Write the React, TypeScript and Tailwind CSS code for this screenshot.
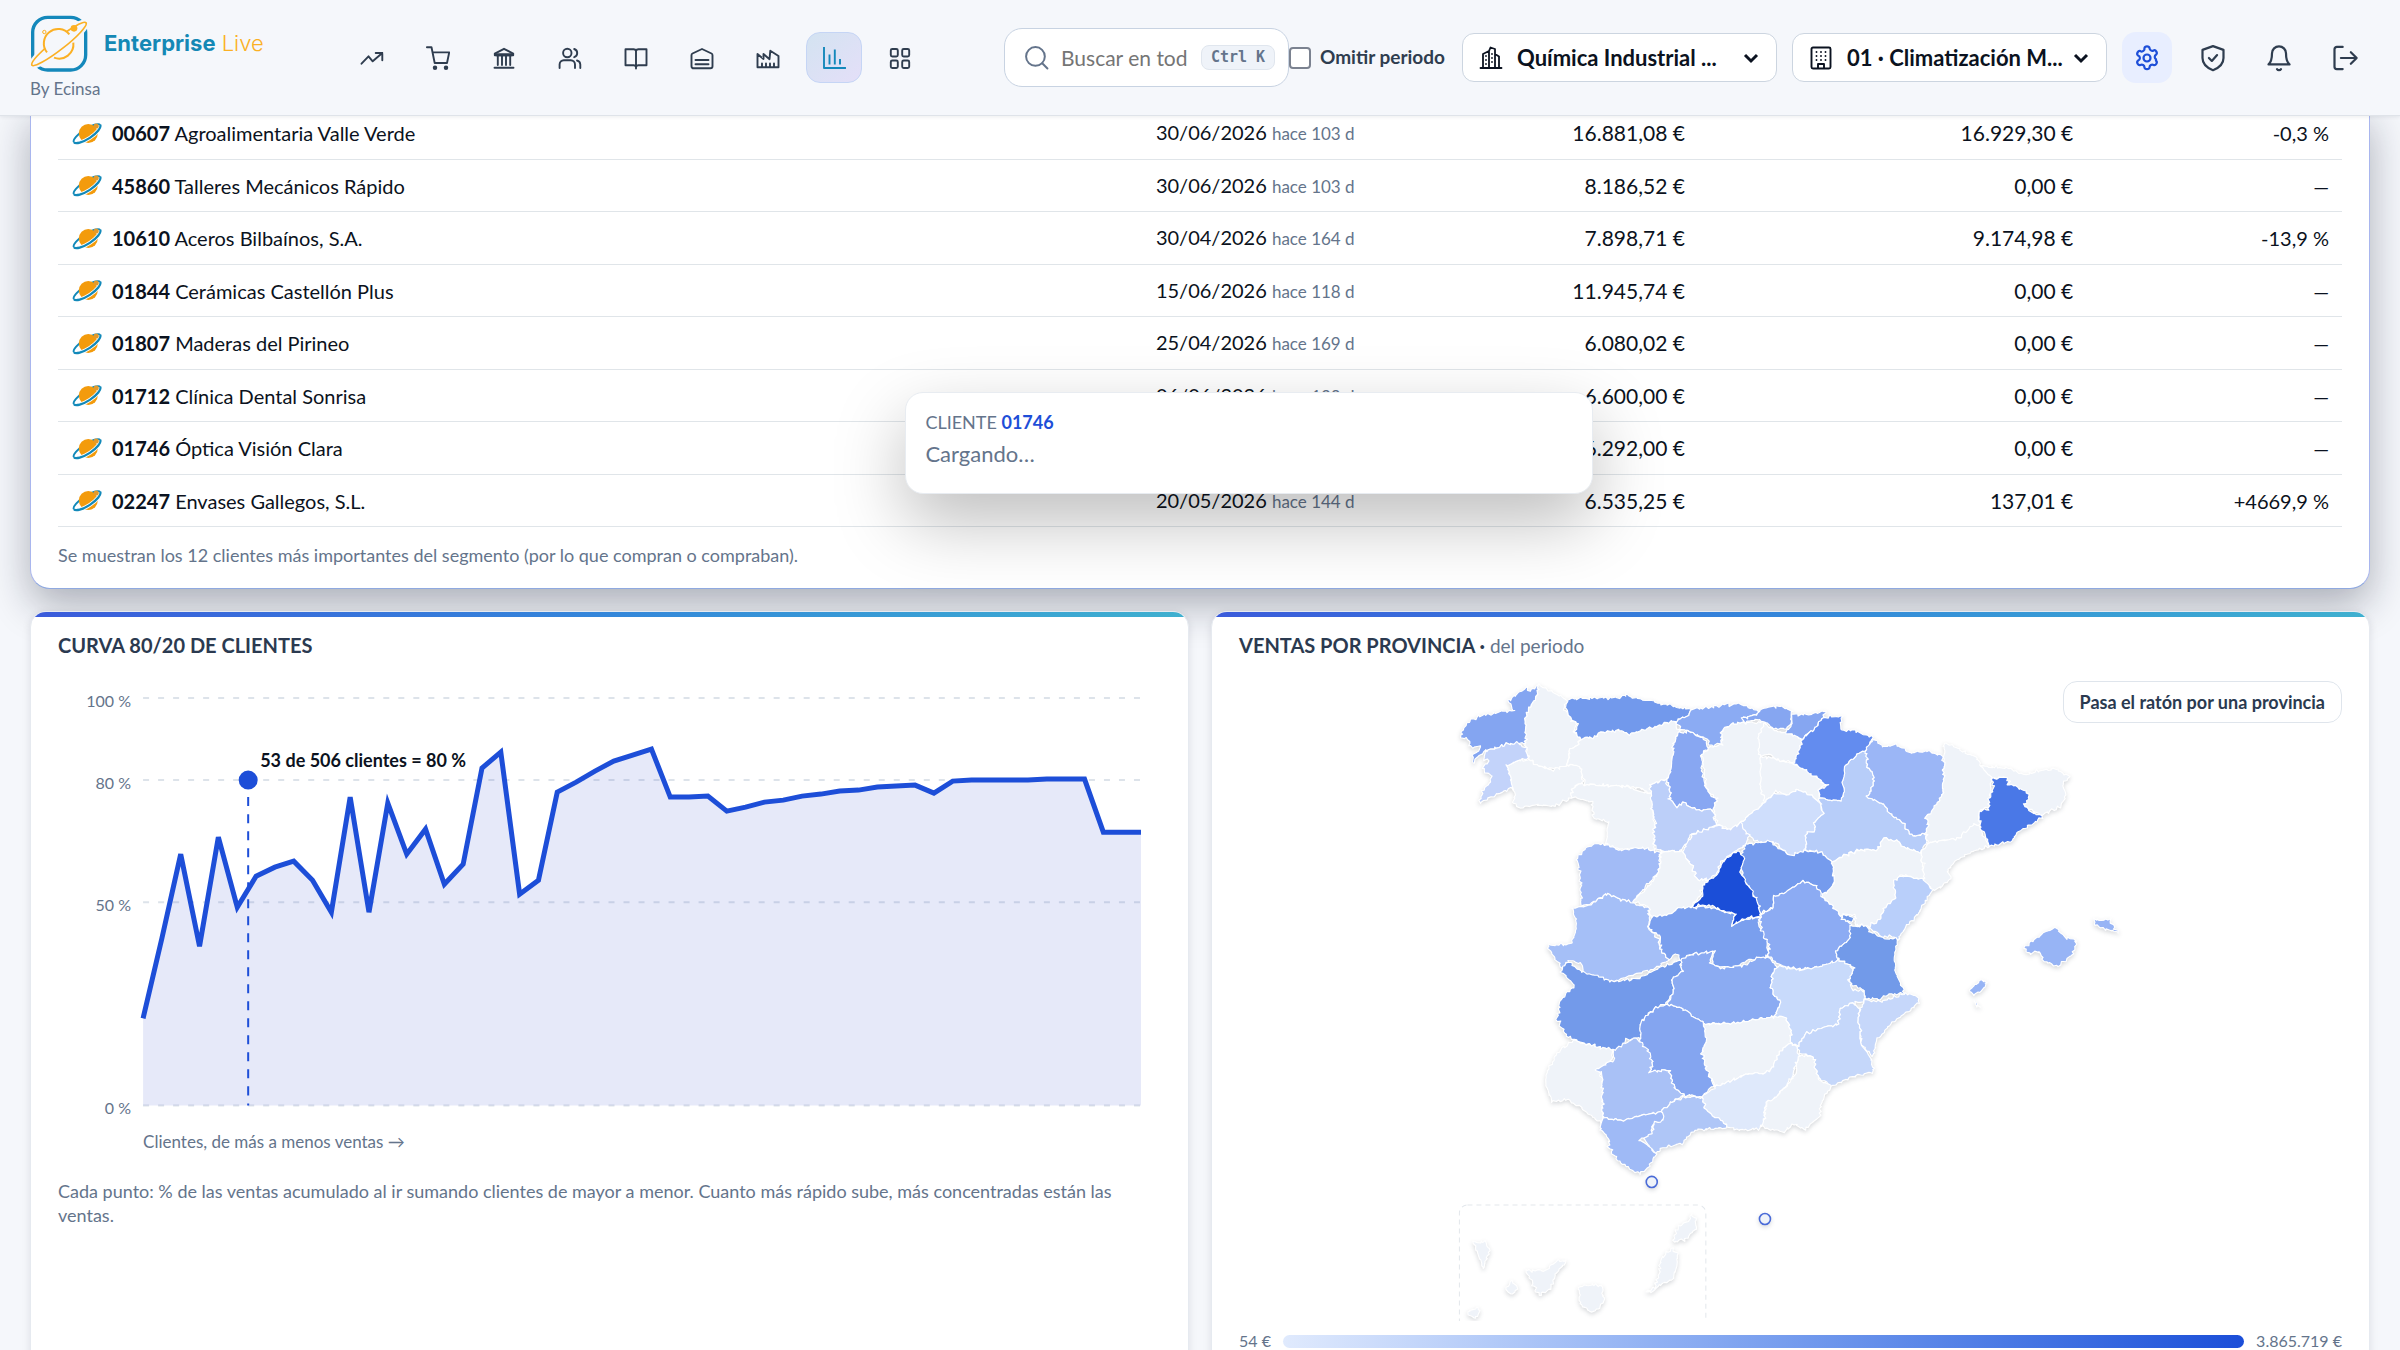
import { useId } from "react";
import type { ReactNode } from "react";

/* ---------- icons ---------- */

function Icon({ children, className = "size-6" }: { children: ReactNode; className?: string }) {
  return (
    <svg viewBox="0 0 24 24" fill="none" stroke="currentColor" strokeWidth="1.9" strokeLinecap="round" strokeLinejoin="round" className={className} aria-hidden="true">
      {children}
    </svg>
  );
}

const navItems: { label: string; active?: boolean; icon: ReactNode }[] = [
  { label: "Ventas", icon: <path d="M1.5 17.7 8.5 10.3l4.2 5L22.3 7M15.7 7h6.6v7.3" /> },
  {
    label: "Compras",
    icon: (
      <>
        <path d="M.9 1.2h4.6L8.7 17H21l2.2-10.6H6.6" />
        <circle cx="9" cy="21.7" r="1.3" fill="currentColor" />
        <circle cx="20" cy="21.7" r="1.3" fill="currentColor" />
      </>
    ),
  },
  {
    label: "Tesorería",
    icon: (
      <>
        <path d="M12 2.8 2.8 7.6v1.6h18.4V7.6Z" />
        <path d="M4.5 8.8h15" strokeWidth="3" />
        <path d="M5.8 10v9M10 10v9M14 10v9M18.2 10v9" />
        <path d="M2.5 21.8h19" />
      </>
    ),
  },
  {
    label: "Clientes",
    icon: (
      <>
        <circle cx="9.3" cy="7" r="4.2" />
        <path d="M16.2 3a4.3 4.3 0 0 1 0 8.2M1.6 22v-3.6A4.2 4.2 0 0 1 5.8 14.2h7a4.2 4.2 0 0 1 4.2 4.2V22M19 14.5a4.3 4.3 0 0 1 3.3 4.1V22" />
      </>
    ),
  },
  { label: "Contabilidad", icon: <path d="M12 5v17.5M1.5 3.2H9.5A2.5 2.5 0 0 1 12 5a2.5 2.5 0 0 1 2.5-1.8h8v16h-8A2.5 2.5 0 0 0 12 21a2.5 2.5 0 0 0-2.5-1.8h-8Z" /> },
  { label: "Almacén", icon: <path d="M1.5 9.2q0-1.2 1-1.7L12 3l9.5 4.5q1 .5 1 1.7V20.3a2 2 0 0 1-2 2h-17a2 2 0 0 1-2-2ZM5.5 14h13M5.5 18.2h13" /> },
  { label: "Producción", icon: <path d="M1.5 21.3V8l6 5V8l6 5.2.8-8.4L22.5 10v11.3ZM6 21v-3.5M10 21v-3.5M14 21v-3.5M18 21v-3.5" /> },
  { label: "Informes", active: true, icon: <path d="M2 2v20h21M7.5 9.5v8M12.8 4.5v13M18 14v3.5" strokeLinecap="square" /> },
  {
    label: "Módulos",
    icon: (
      <>
        <rect x="2.8" y="3" width="7" height="7.5" rx="1.5" />
        <rect x="14.2" y="3" width="7" height="7.5" rx="1.5" />
        <rect x="2.8" y="14.5" width="7" height="7.5" rx="1.5" />
        <rect x="14.2" y="14.5" width="7" height="7.5" rx="1.5" />
      </>
    ),
  },
];

function Logo() {
  return (
    <svg viewBox="33 15 177 177" className="size-[59px] shrink-0" fill="none" aria-hidden="true">
      <rect x="41" y="25" width="159" height="158" rx="45" stroke="#1488bb" strokeWidth="10" />
      <ellipse cx="120" cy="105" rx="105" ry="17" transform="rotate(-38 120 105)" stroke="#f5f7fb" strokeWidth="16" fill="#f5f7fb" />
      <ellipse cx="120" cy="105" rx="103" ry="17" transform="rotate(-38 120 105)" stroke="#fbb024" strokeWidth="5" />
      <path d="M85 132a43 43 0 1 1 70-52L85 132Z" fill="#f5f7fb" />
      <path d="M84 130a43 43 0 0 1 67-54" stroke="#fbb024" strokeWidth="6" />
      <path d="M163 101a43 43 0 0 1-58 45" stroke="#fbb024" strokeWidth="6" />
      <circle cx="165" cy="58" r="10" fill="#fbb024" />
      <circle cx="76" cy="69" r="5" stroke="#fbb024" strokeWidth="3" />
    </svg>
  );
}

function Planet() {
  return (
    <svg viewBox="152 335 98 70" className="h-[23px] w-8 shrink-0" fill="none" aria-hidden="true">
      <ellipse cx="201" cy="370" rx="48" ry="14" transform="rotate(-33 201 370)" stroke="#1289b9" strokeWidth="6" />
      <circle cx="205" cy="370" r="29" fill="#f39b0c" />
      <g transform="rotate(-33 201 370)">
        <path d="M153 370a48 16 0 0 0 96 0" stroke="#ffffff" strokeWidth="12" />
        <path d="M153 370a48 16 0 0 0 96 0" stroke="#1289b9" strokeWidth="7" />
      </g>
      <circle cx="229" cy="347" r="8" fill="#e39a2a" />
    </svg>
  );
}

/* ---------- table ---------- */

const rows = [
  ["00607", "Agroalimentaria Valle Verde", "30/06/2026", "hace 103 d", "16.881,08 €", "16.929,30 €", "-0,3 %"],
  ["45860", "Talleres Mecánicos Rápido", "30/06/2026", "hace 103 d", "8.186,52 €", "0,00 €", "—"],
  ["10610", "Aceros Bilbaínos, S.A.", "30/04/2026", "hace 164 d", "7.898,71 €", "9.174,98 €", "-13,9 %"],
  ["01844", "Cerámicas Castellón Plus", "15/06/2026", "hace 118 d", "11.945,74 €", "0,00 €", "—"],
  ["01807", "Maderas del Pirineo", "25/04/2026", "hace 169 d", "6.080,02 €", "0,00 €", "—"],
  ["01712", "Clínica Dental Sonrisa", "06/06/2026", "hace 128 d", "6.600,00 €", "0,00 €", "—"],
  ["01746", "Óptica Visión Clara", "12/05/2026", "hace 152 d", "6.292,00 €", "0,00 €", "—"],
  ["02247", "Envases Gallegos, S.L.", "20/05/2026", "hace 144 d", "6.535,25 €", "137,01 €", "+4669,9 %"],
];

function ClientTable() {
  return (
    <section className="relative -mt-[9px] rounded-b-[20px] border border-t-0 border-[#a9b6ee] border-b-[#8fa9e0] bg-white px-[27px] pb-4 shadow-[0_16px_40px_rgba(15,23,42,0.32)]">
      <table className="w-full table-fixed border-separate border-spacing-0 text-[#0b1220]">
        <colgroup>
          <col className="w-[47.5%]" />
          <col className="w-[13%]" />
          <col className="w-[11.3%]" />
          <col className="w-[17%]" />
          <col className="w-[11.2%]" />
        </colgroup>
        <tbody>
          {rows.map((r) => (
            <tr key={r[0]} className="h-[53px] text-xl leading-6 even:h-[52px] [&>td]:border-b [&>td]:border-[#e0e5e9] [&>td]:px-[13px]">
              <td>
                <div className="flex items-center gap-[9px]">
                  <Planet />
                  <span>
                    <b>{r[0]}</b> {r[1]}
                  </span>
                </div>
              </td>
              <td className="whitespace-nowrap">
                {r[2]} <span className="text-[17px] text-[#64748b]">{r[3]}</span>
              </td>
              <td className="text-right text-[21px]">{r[4]}</td>
              <td className="text-right text-[21px]">{r[5]}</td>
              <td className="text-right">{r[6]}</td>
            </tr>
          ))}
        </tbody>
      </table>
      <p className="mt-4 pb-[5px] text-lg leading-6 text-[#64748b]">Se muestran los 12 clientes más importantes del segmento (por lo que compran o compraban).</p>
      <div role="tooltip" className="absolute top-[285px] left-[37.4%] h-[102px] w-[688px] rounded-[18px] border border-[#e8ecf1] bg-white px-[19px] py-[17px] text-[#64748b] shadow-[0_28px_70px_rgba(0,0,0,0.26)]">
        <p className="text-lg leading-6">
          CLIENTE <b className="text-[#1d4ed8]">01746</b>
        </p>
        <p className="mt-1 text-[22px] leading-8">Cargando…</p>
      </div>
    </section>
  );
}

/* ---------- 80/20 curve ---------- */

const curve = [
  1019, 939, 855, 947, 838, 908, 877, 868, 862, 881, 913, 798, 913, 804, 855, 830, 885, 865, 769, 753, 895, 881, 793, 783, 772, 762, 756, 750, 798, 798, 797, 812, 808, 803,
  801, 797, 795, 792, 791, 788, 787, 786, 794, 782, 781, 781, 781, 781, 780, 780, 780, 833, 833, 833,
].map((y) => y - 670);

function CurveChart() {
  const line = curve.map((y, i) => `${(85 + (i * 997) / 53).toFixed(1)} ${y}`).join("L");
  const grid: [string, number][] = [
    ["100 %", 29],
    ["80 %", 111],
    ["50 %", 233],
    ["0 %", 436],
  ];
  return (
    <svg viewBox="0 0 1102 490" className="w-full" role="img" aria-label="Curva 80/20 de clientes">
      {grid.map(([label, y]) => (
        <g key={label}>
          <line x1="85" x2="1082" y1={y} y2={y} stroke="#dde3ea" strokeWidth="2" strokeDasharray="6 9" />
          <text x="73" y={y + 9} textAnchor="end" fontSize="16" fill="#64748b">
            {label}
          </text>
        </g>
      ))}
      <path d={`M85 436L${line}L1082 436Z`} fill="#3b55d0" fillOpacity="0.13" />
      <line x1="190" x2="190" y1="111" y2="436" stroke="#1d4ed8" strokeWidth="2" strokeDasharray="9 8" />
      <path d={`M${line}`} fill="none" stroke="#1d4ed8" strokeWidth="5" />
      <circle cx="190" cy="111" r="9.5" fill="#1d4ed8" />
      <text x="202" y="98" fontSize="18" fontWeight="700" fill="#0b1220">
        53 de 506 clientes = 80 %
      </text>
      <text x="85" y="479" fontSize="17" fill="#64748b">
        Clientes, de más a menos ventas →
      </text>
    </svg>
  );
}

/* ---------- province map ---------- */

// Each sheet of the map has its own origin, in thirds of a unit.
const origins = { A: [0, 0], B: [960, 0], C: [240, 720], D: [0, 1500] } as const;
type Sheet = keyof typeof origins;
const NONE = "#eff3f9";

const provinces: [string, Sheet, string, string][] = [
  ["Lugo", "A", NONE, "300,78 325,90 350,100 380,118 385,125 375,145 390,165 400,185 420,192 405,215 425,235 420,255 395,270 385,310 370,335 340,325 310,325 270,300 262,265 260,250 262,215 260,178 268,150 290,120"],
  ["A Coruña", "A", "#84a5f1", "300,78 290,120 268,150 260,178 262,215 260,250 205,255 140,275 118,292 103,310 102,290 125,262 95,262 90,240 70,235 68,215 85,190 125,168 150,165 190,155 225,155 220,140 208,125 235,105 265,82 272,95"],
  ["Ourense", "A", NONE, "205,318 240,303 270,300 310,325 345,330 385,318 410,312 425,320 430,345 432,365 400,390 400,415 375,425 365,435 330,440 300,435 270,440 240,445 225,430 228,400 215,380 215,350"],
  ["Pontevedra", "A", "#c3d3fa", "140,275 205,255 240,250 262,268 270,295 240,303 205,318 215,350 222,385 180,402 125,430 130,395 150,370 165,350 140,340 135,325 150,305 138,300"],
  ["León", "A", NONE, "425,237 475,232 480,220 545,212 570,225 610,212 660,200 690,188 705,180 710,195 722,215 705,250 700,310 693,355 635,375 640,405 600,385 560,380 500,378 440,375 430,345 425,320 385,315 395,270 420,255"],
  ["Asturias", "A", "#7299ec", "380,145 385,125 400,118 480,115 545,115 565,103 580,115 640,125 700,140 755,150 750,170 730,175 710,185 690,188 660,200 610,212 570,225 545,212 480,220 475,232 425,237 408,215 422,192 400,185 390,165"],
  ["Zamora", "A", NONE, "440,375 500,378 560,380 640,405 640,450 650,510 645,575 600,565 555,570 500,555 510,490 465,475 460,425 430,422 400,410 400,390 425,372"],
  ["Burgos", "A", NONE, "875,195 900,190 975,188 985,210 970,225 1000,245 985,265 965,290 970,330 965,380 990,395 985,425 945,455 905,490 870,512 835,495 825,455 835,415 805,395 798,350 790,290 808,265 850,255 848,215"],
  ["Álava", "B", NONE, "15,190 45,215 90,220 128,240 122,270 125,290 100,310 60,300 30,285 0,290 0,230"],
  ["La Rioja", "B", NONE, "5,290 60,300 105,315 150,335 200,375 180,390 180,425 150,405 110,390 85,408 50,395 20,425 5,395 5,340"],
  ["Cantabria", "A", "#8babf3", "755,150 840,140 865,130 875,138 900,130 950,155 975,160 915,175 912,190 880,192 850,212 845,250 820,262 800,235 760,218 725,210 710,185 730,175 750,170"],
  ["Palencia", "A", "#88a7f2", "720,218 760,218 800,240 808,265 788,285 790,340 800,380 815,408 835,420 825,450 770,452 735,430 715,442 690,420 695,395 685,360 700,310 705,250"],
  ["Valladolid", "A", "#bccff9", "635,375 680,360 695,395 690,420 715,442 735,430 770,452 820,450 832,495 800,512 760,522 745,550 720,578 650,570 645,520 650,490 640,450"],
  ["Bizkaia", "A", "#86a6f1", "950,165 975,145 1020,140 1060,155 1055,190 1040,210 1000,205 980,190 950,180 915,190 912,178"],
  ["Gipuzkoa", "B", "#86a6f1", "100,165 150,165 200,155 185,185 160,215 125,238 78,220 95,200"],
  ["Soria", "B", "#cfdefc", "20,425 50,400 85,408 110,390 150,405 180,425 192,460 168,485 165,515 142,520 140,575 90,587 50,550 -10,545 -35,520 -60,495 -15,455"],
  ["Zaragoza", "B", "#b7cdf9", "320,270 325,320 345,345 340,380 325,410 375,435 395,465 430,490 460,530 500,522 503,550 480,582 440,565 415,545 370,535 355,570 300,570 250,590 220,608 190,580 140,570 142,520 165,515 168,485 192,460 180,415 243,425 257,400 248,370 258,320 290,285"],
  ["Navarra", "B", "#638cef", "128,238 160,215 185,180 215,170 248,172 245,210 290,215 342,235 325,270 290,285 258,320 250,370 257,400 243,425 180,415 180,390 208,378 150,338 105,312 122,270"],
  ["Huesca", "B", "#9bb6f6", "342,240 375,262 410,255 450,280 500,275 545,285 555,310 555,370 545,420 520,450 500,475 510,500 495,522 460,530 430,490 395,465 375,435 325,410 340,380 345,345 325,320 320,275"],
  ["Lleida", "B", NONE, "555,250 600,270 650,290 665,320 700,330 695,370 690,440 658,455 660,495 600,535 505,550 500,515 510,495 500,475 530,435 550,400 555,310"],
  ["Girona", "B", NONE, "665,320 740,325 800,345 830,335 890,328 930,350 910,375 920,410 905,440 850,465 790,440 808,400 750,380 745,355 700,355"],
  ["Tarragona", "B", NONE, "505,550 600,535 640,495 660,495 665,515 690,560 640,575 595,600 565,635 575,655 540,685 520,690 490,660 495,610 480,590"],
  ["Barcelona", "B", "#4a78e7", "700,357 745,352 745,375 770,380 808,400 805,425 790,435 815,460 850,465 848,475 780,515 757,545 690,560 680,530 665,510 658,455 685,450 690,420 700,395"],
  ["Teruel", "B", NONE, "220,608 250,590 300,572 355,570 370,535 415,545 440,565 485,582 495,660 425,645 405,665 410,715 375,745 360,780 330,800 290,795 285,765 240,765 190,710 225,670"],
  ["Castellón", "B", "#b9cffa", "425,648 490,658 522,692 480,755 435,810 420,838 390,830 365,830 330,800 360,780 375,745 410,715 403,665"],
  ["Segovia", "A", "#ccdafb", "735,570 765,522 835,497 865,512 905,492 930,530 915,560 880,580 845,608 835,635 810,660 775,660 760,620 735,595"],
  ["Salamanca", "A", "#a2bbf6", "440,565 480,550 550,572 600,563 665,578 660,640 620,680 585,730 545,720 510,700 450,735 428,740 425,650 415,600"],
  ["Ávila", "A", NONE, "668,575 730,575 760,620 775,660 810,660 790,690 785,710 755,745 720,745 690,765 635,770 630,745 585,725 620,690 660,640"],
  ["Guadalajara", "B", "#759bed", "-45,555 30,545 90,587 140,572 190,580 220,608 225,670 190,710 170,680 130,665 75,700 45,710 40,745 5,760 0,740 -20,700 -45,660 -55,610"],
  ["Cuenca", "B", "#8cabf3", "5,765 40,745 45,710 75,700 130,665 170,680 195,715 245,765 280,795 270,840 232,870 235,905 190,920 150,925 115,928 50,910 28,885 30,855 5,815"],
  ["Valencia", "B", "#729ae9", "275,800 320,798 330,815 370,835 420,838 405,880 410,940 437,1000 380,1005 365,1018 315,1015 315,990 275,975 270,950 285,920 235,900 232,870 270,840"],
  ["Rincón de Ademuz", "B", "#729ae9", "250,765 290,772 280,785 250,780"],
  ["Cáceres", "A", "#a5bff7", "400,745 450,738 510,700 545,720 585,730 632,748 630,805 660,840 665,870 690,900 640,930 600,940 525,965 435,945 430,915 390,900 375,930 345,890 325,857 400,852 415,790"],
  ["Toledo", "A", "#7a9fee", "635,770 690,765 720,745 800,740 890,765 880,795 920,778 962,772 960,800 985,845 988,890 930,900 880,925 820,915 825,875 750,885 725,905 715,880 690,900 665,870 665,835 632,805"],
  ["Madrid", "A", "#1b4ed8", "895,573 915,590 905,640 930,680 955,720 965,770 920,775 880,795 890,765 820,740 785,735 755,745 790,710 795,675 840,640 850,605"],
  ["Badajoz", "C", "#739aea", "150,185 190,215 285,245 360,235 420,205 485,180 490,215 460,240 465,275 445,310 410,325 370,360 365,415 320,420 310,450 270,450 215,435 145,410 115,355 125,305 165,255 125,215"],
  ["Ciudad Real", "C", "#8babf2", "485,180 515,165 580,155 575,190 610,205 680,195 720,170 748,175 775,200 760,225 755,265 785,310 770,350 710,358 650,370 600,370 555,372 495,330 448,312 465,275 460,240 490,215"],
  ["Albacete", "C", "#c8dafb", "775,198 845,210 900,200 955,182 995,195 1000,215 990,240 1000,268 1035,275 1035,305 1000,310 965,325 955,375 920,380 865,400 835,435 815,430 815,390 800,355 770,350 785,310 755,265 760,225"],
  ["Alicante", "C", "#c6d7fa", "1040,300 1085,305 1160,280 1195,290 1200,310 1110,375 1075,420 1060,470 1025,430 1025,390 1015,360 1028,320"],
  ["Murcia", "C", "#c5d7fa", "835,435 865,400 920,380 955,375 965,325 1000,310 1025,325 1015,360 1025,390 1022,425 1055,475 1065,515 1000,530 935,560 900,535 885,500 885,470 840,460"],
  ["Huelva", "C", NONE, "165,420 215,435 283,450 280,480 235,510 255,540 250,675 200,630 150,598 100,605 80,550 90,500 125,450"],
  ["Jaén", "C", NONE, "555,372 650,370 710,358 770,350 800,352 815,390 815,430 780,455 760,500 740,520 690,520 640,540 590,560 560,500 550,460 560,420"],
  ["Almería", "C", NONE, "838,465 885,470 888,505 900,540 938,560 910,600 900,650 860,690 830,670 790,695 725,680 735,650 745,605 785,580 830,520"],
  ["Granada", "C", "#dfe9fb", "550,590 590,560 640,540 690,520 740,520 760,500 780,455 815,430 835,440 838,470 820,530 780,585 740,610 735,660 725,685 670,690 622,682 620,670 560,630"],
  ["Córdoba", "C", "#84a5f0", "448,312 495,330 555,372 562,420 550,460 560,500 585,555 550,590 495,585 465,560 450,510 395,515 400,485 365,430 365,370 410,325"],
  ["Sevilla", "C", "#a9c1f6", "320,430 350,412 385,445 400,485 395,515 450,510 465,560 495,585 460,605 430,635 370,645 310,662 252,652 250,520 230,510 285,480 285,450"],
  ["Málaga", "C", "#afc6f7", "460,605 495,590 550,592 560,630 620,670 625,682 530,690 490,730 440,740 408,760 390,735 375,715 405,690 400,665 430,660 430,635"],
  ["Cádiz", "C", "#9fbaf6", "252,652 310,662 370,645 430,635 435,660 400,670 400,700 360,720 385,730 410,760 390,800 365,822 320,795 290,770 270,740 270,712 245,690"],
  ["Mallorca", "B", "#97b4f5", "792,865 850,820 890,803 905,820 920,835 950,840 940,880 895,922 850,900 840,875 815,880"],
  ["Menorca", "B", "#97b4f5", "1003,780 1050,780 1075,820 1040,808 1005,797"],
  ["Ibiza", "B", "#97b4f5", "628,990 665,960 682,965 670,990 645,1005"],
  ["Formentera", "B", "#97b4f5", "645,1025 655,1032 664,1038 650,1038"],
  ["La Palma", "D", NONE, "105,245 140,245 155,270 135,325"],
  ["La Gomera", "D", NONE, "200,385 220,362 240,385 215,402"],
  ["El Hierro", "D", NONE, "85,455 120,440 125,455 110,475"],
  ["Tenerife", "D", NONE, "262,330 320,330 355,300 385,302 350,340 335,385 300,405"],
  ["Gran Canaria", "D", NONE, "420,380 450,373 490,375 495,420 475,448 455,455 425,430"],
  ["Fuerteventura", "D", NONE, "620,395 650,380 670,290 700,262 718,285 705,355 660,375 640,395"],
  ["Lanzarote", "D", NONE, "705,245 712,205 750,180 755,160 772,175 772,205 745,235"],
];

// Displaces a border point by a value that depends on its place only,
// so that two neighbouring provinces get the same ragged border.
function ragged(x: number, y: number): [number, number] {
  const a = Math.sin(x * 0.31 + y * 0.17) + Math.sin(x * 0.13 - y * 0.43 + 1) + Math.sin((x + y) * 0.57);
  const b = Math.sin(y * 0.29 - x * 0.19 + 2) + Math.sin(y * 0.11 + x * 0.41) + Math.sin((x - y) * 0.53);
  return [x + a * 1.9 - 3, y + b * 1.9 - 2];
}

function outline(sheet: Sheet, points: string) {
  const [ox, oy] = origins[sheet];
  const p = points.split(" ").map((s) => s.split(",").map(Number));
  const out: string[] = [];
  p.forEach(([x, y], i) => {
    const [nx, ny] = p[(i + 1) % p.length];
    const steps = Math.max(1, Math.round(Math.hypot(nx - x, ny - y) / 6));
    for (let k = 0; k < steps; k++) {
      const [u, v] = ragged(ox + x + ((nx - x) * k) / steps, oy + y + ((ny - y) * k) / steps);
      out.push(`${u.toFixed(1)} ${v.toFixed(1)}`);
    }
  });
  return `M${out.join("L")}Z`;
}

function SpainMap() {
  return (
    <svg viewBox="0 0 1101 650" className="w-full" role="img" aria-label="Mapa de ventas por provincia">
      <rect x="220" y="534" width="246" height="160" rx="8" fill="none" stroke="#e3e7ec" strokeDasharray="5 4" />
      <g className="drop-shadow-[0_2px_2px_rgba(15,23,42,0.16)]">
        <g transform="translate(200 -10) scale(0.33333)" stroke="#ffffff" strokeWidth="3.5" strokeLinejoin="round">
          {provinces.map(([name, sheet, fill, points]) => (
            <path key={name} d={outline(sheet, points)} fill={fill}>
              <title>{name}</title>
            </path>
          ))}
        </g>
        <circle cx="412" cy="511" r="5.5" fill="#eff3f9" stroke="#4a6bd8" strokeWidth="1.6" />
        <circle cx="525" cy="548" r="5.5" fill="#eff3f9" stroke="#4a6bd8" strokeWidth="1.6" />
      </g>
    </svg>
  );
}

/* ---------- page parts ---------- */

function Panel({ title, note, children }: { title: string; note?: string; children: ReactNode }) {
  return (
    <section className="relative flex flex-col overflow-hidden rounded-[16px] border border-[#e6eaf0] bg-white px-[27px] shadow-[0_2px_8px_rgba(15,23,42,0.1)]">
      <div className="-mx-7 h-[5px] bg-linear-to-r from-[#3b5bdb] via-[#3487da] to-[#3fb0cf]" />
      <h2 className="mt-4 text-xl leading-6 font-bold text-[#2b3a50]">
        {title}
        {note && <span className="text-[19px] font-normal text-[#64748b]"> {note}</span>}
      </h2>
      {children}
    </section>
  );
}

function CompanySelect({ label, value, icon }: { label: string; value: string; icon: ReactNode }) {
  const id = useId();
  return (
    <div className="relative flex h-[49px] w-[315px] items-center rounded-[12px] border border-[#ccd5e0] bg-white text-[#0b1220]">
      <label htmlFor={id} className="absolute left-4">
        <span className="sr-only">{label}</span>
        <Icon>{icon}</Icon>
      </label>
      <select id={id} className="h-full w-full appearance-none rounded-[12px] bg-transparent pr-10 pl-[54px] text-[22px] font-bold">
        <option>{value}</option>
      </select>
      <svg viewBox="0 0 24 24" className="pointer-events-none absolute right-[13px] size-6" fill="none" stroke="currentColor" strokeWidth="3" aria-hidden="true">
        <path d="m6 9 6 6 6-6" />
      </svg>
    </div>
  );
}

function Header() {
  return (
    <header className="relative z-10 flex h-[116px] items-center justify-between border-b border-[#dfe3e9] bg-[#f5f7fb] px-[30px] text-[#2f3d4f] shadow-[0_1px_4px_rgba(15,23,42,0.08)]">
      <a href="#inicio" className="flex w-[238px] flex-col">
        <span className="flex items-center gap-[15px]">
          <Logo />
          <span className="font-['Inter'] text-[22px] whitespace-nowrap text-[#fbb024]">
            <b className="font-bold text-[#1488b5]">Enterprise</b> <span className="font-light">Live</span>
          </span>
        </span>
        <span className="mt-1 text-[17px] leading-6 text-[#64748b]">By Ecinsa</span>
      </a>
      <nav className="flex gap-[10px]" aria-label="Módulos">
        {navItems.map((n) =>
          n.active ? (
            <button key={n.label} aria-label={n.label} aria-current="page" className="flex h-[51px] w-14 items-center justify-center rounded-[14px] border border-[#c5d5f5] bg-linear-to-br from-[#d3e3f1] to-[#e4dff8] text-[#1488bb]">
              <Icon>{n.icon}</Icon>
            </button>
          ) : (
            <button key={n.label} aria-label={n.label} className="flex h-[51px] w-14 items-center justify-center">
              <Icon>{n.icon}</Icon>
            </button>
          ),
        )}
      </nav>
      <div className="flex items-center gap-[15px]">
        <div className="flex items-center">
          <label className="flex h-[59px] w-[285px] items-center rounded-[18px] border border-[#c8d3e2] bg-white pr-[13px] pl-[19px]">
            <Icon className="size-[25px] shrink-0 text-[#64748b]">
              <circle cx="11" cy="11" r="9" />
              <path d="m17.5 17.5 5 5" />
            </Icon>
            <input type="text" aria-label="Buscar" placeholder="Buscar en tod" className="ml-3 w-0 flex-1 text-[21px] placeholder:text-[#757575]" />
            <kbd className="ml-2 flex h-[25px] w-[74px] shrink-0 items-center justify-center rounded-lg border border-[#e0e6ee] bg-[#eff3f9] font-['DejaVu_Sans_Mono'] text-[15px] font-bold text-[#64748b]">Ctrl K</kbd>
          </label>
          <label className="flex h-12 w-[154px] items-center gap-[9px] text-[19px] font-bold whitespace-nowrap">
            <input type="checkbox" className="size-[22px] shrink-0 appearance-none rounded-[4px] border-2 border-[#7b8290] bg-white" />
            Omitir periodo
          </label>
        </div>
        <div className="-mr-1 ml-1">
          <CompanySelect
            label="Empresa"
            value="Química Industrial ..."
            icon={<path strokeWidth="1.8" d="M1.5 22h21M4 22V8l6-3V22M10 5l1.5-3.5L16 3v5l4 2.5V22M16 8v14M7 10v.1M7 14v.1M7 18v.1M13 8v.1M13 12v.1M13 16v.1" />}
          />
        </div>
        <div className="ml-1">
          <CompanySelect
            label="Centro"
            value="01 · Climatización M..."
            icon={
              <>
                <rect x="2.5" y="1.5" width="19" height="21" rx="1.5" />
                <path d="M7.5 6v.1M12 6v.1M16.5 6v.1M7.5 10v.1M12 10v.1M16.5 10v.1M7.5 14v.1M12 14v.1M16.5 14v.1M9 22v-4h6v4" />
              </>
            }
          />
        </div>
        <div className="flex gap-4">
          <button aria-label="Configuración" className="flex h-[51px] w-[50px] items-center justify-center rounded-[14px] bg-[#e8eeff] text-[#1d4ed8]">
            <Icon className="size-7">
              <path d="M9.8 3.6c.4-2.1 4-2.1 4.4 0a2.3 2.3 0 0 0 3.4 1.9c2-.8 3.8 2.2 2.1 3.7a2.3 2.3 0 0 0 0 3.9v1.2c1.7 1.3-.1 4.4-2.1 3.700a2.3 2.3 0 0 0-3.4 2c-.4 2.1-4 2.1-4.4 0a2.3 2.3 0 0 0-3.4-2c-2 .8-3.8-2.3-2.1-3.700a2.3 2.3 0 0 0 0-4.4c-1.7-1.6.1-4.5 2.1-3.800a2.3 2.3 0 0 0 3.4-2.5Z" />
              <circle cx="12" cy="12" r="3" />
            </Icon>
          </button>
          <button aria-label="Seguridad" className="flex h-[51px] w-[50px] items-center justify-center">
            <Icon className="size-7">
              <path d="M12 1.8 21 5v7c0 5-4 8.5-9 10.5C7 20.5 3 17 3 12V5ZM8.5 12l2.5 2.5 4.5-5" />
            </Icon>
          </button>
          <button aria-label="Avisos" className="flex h-[51px] w-[50px] items-center justify-center">
            <Icon className="size-7">
              <path d="M6 8a6 6 0 0 1 12 0c0 6 1.2 8 3 9.5H3C4.8 16 6 14 6 8M10.3 21.5a2 2 0 0 0 3.4 0" />
            </Icon>
          </button>
          <button aria-label="Salir" className="flex h-[51px] w-[50px] items-center justify-center">
            <Icon className="size-7">
              <path d="M10 2.5H5a2 2 0 0 0-2 2v15a2 2 0 0 0 2 2h5M8.5 12H22M17 7l5 5-5 5" />
            </Icon>
          </button>
        </div>
      </div>
    </header>
  );
}

export default function App() {
  return (
    <div className="h-screen overflow-hidden bg-[#f5f7fb] font-['Lato',sans-serif]">
      <Header />
      <main className="px-[30px]">
        <ClientTable />
        <div className="relative mt-[22px] grid grid-cols-2 gap-[22px]">
          <Panel title="CURVA 80/20 DE CLIENTES">
            <div className="mt-3">
              <CurveChart />
            </div>
            <p className="mt-5 text-lg leading-6 text-[#64748b]">
              Cada punto: % de las ventas acumulado al ir sumando clientes de mayor a menor. Cuanto más rápido sube, más concentradas están las ventas.
            </p>
          </Panel>
          <Panel title="VENTAS POR PROVINCIA ·" note="del periodo">
            <div className="relative mt-3">
              <SpainMap />
              <div className="absolute top-[11px] right-0 rounded-[14px] border border-[#dfe5ec] bg-white px-4 py-2 text-lg leading-6 font-bold text-[#2b3a50]">Pasa el ratón por una provincia</div>
            </div>
            <div className="mt-2 flex items-center gap-3 pb-12 text-base leading-6 text-[#64748b]">
              <span>54 €</span>
              <div className="h-[13px] flex-1 rounded-full bg-linear-to-r from-[#e0eafd] to-[#1b4ed8]" />
              <span>3.865.719 €</span>
            </div>
          </Panel>
        </div>
      </main>
    </div>
  );
}
